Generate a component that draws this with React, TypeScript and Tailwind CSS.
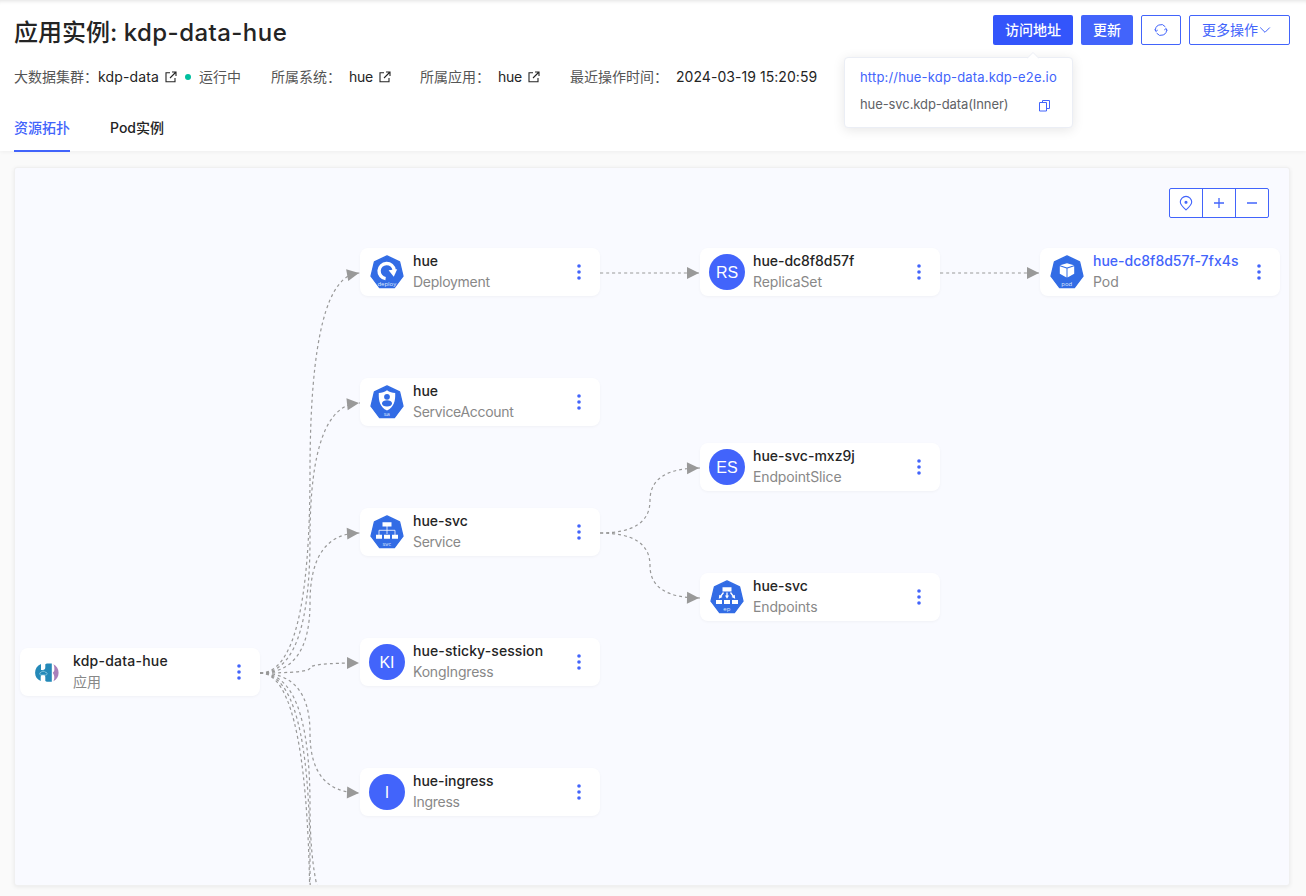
import React from "react";

const SANS = "font-['Inter','Noto_Sans_CJK_SC',sans-serif]";

const HEPTAGON = "M18 1.9 L30.6 7.9 L34 22.2 L25.4 33.7 H10.6 L2 22.2 L5.4 7.9 Z";

function Hept({ label, children }: { label: string; children: React.ReactNode }) {
  return (
    <svg width="36" height="36" viewBox="0 0 36 36" className="shrink-0">
      <path d={HEPTAGON} fill="#326ce5" stroke="#326ce5" strokeWidth="1.3" strokeLinejoin="round" />
      {children}
      <text x="17.8" y="32.2" fontSize="6" fill="#dfe8fc" textAnchor="middle" fontFamily="Open Sans, sans-serif">
        {label}
      </text>
    </svg>
  );
}

function KindIcon({ kind }: { kind: string }) {
  if (kind === "Deployment")
    return (
      <Hept label="deploy">
        <path d="M16.6 24.6A7.6 7.6 0 1 1 25.2 16.2" fill="none" stroke="#fff" strokeWidth="3.4" />
        <path d="M19.6 16.300l8.600-1.100-3.400 7.600z" fill="#fff" />
      </Hept>
    );
  if (kind === "ServiceAccount")
    return (
      <Hept label="sa">
        <path d="M18 6.200c2.600 2 5.200 2.600 8.200 2.800.3 8-1.200 14.200-8.200 17.500C11 23.200 9.500 17 9.800 9c3-.2 5.600-.8 8.200-2.800z" fill="#fff" />
        <circle cx="18" cy="12.800" r="2.900" fill="#326ce5" />
        <path d="M13 19.300c0-4 10-4 10 0 0 2.200-2 3.200-5 3.200s-5-1-5-3.200z" fill="#326ce5" />
      </Hept>
    );
  if (kind === "Service")
    return (
      <Hept label="svc">
        <path d="M18 12v8M10 21v-4.700h16V21" fill="none" stroke="#fff" strokeWidth=".8" />
        <path d="M13.500 8.200h9v4.200h-9zM7 20.700h6v4H7zM15 20.700h6v4h-6zM23 20.700h6v4h-6z" fill="#fff" />
      </Hept>
    );
  if (kind === "Endpoints")
    return (
      <Hept label="ep">
        <path d="M13.500 8.200h9v4.200h-9zM7 21h6v4H7zM15 21h6v4h-6zM23 21h6v4h-6z" fill="#fff" />
        <path d="M14.500 13.500l-3 4M18 13.500v4M21.500 13.500l3 4" stroke="#fff" strokeWidth="1.300" />
        <path d="M9.800 19.700l.5-4 3.200 2.400zM16 16.500h4L18 19.700zM26.200 19.700l-.5-4-3.200 2.400z" fill="#fff" />
      </Hept>
    );
  if (kind === "Pod")
    return (
      <Hept label="pod">
        <path d="M18 9.200l7 2.100-7 2.200-7-2.200zM10.800 12.300l6.700 2.100v9.200l-6.700-3.800zM25.200 12.300l-6.700 2.100v9.200l6.700-3.800z" fill="#fff" />
      </Hept>
    );
  if (kind === "应用")
    return (
      <svg width="36" height="36" viewBox="0 0 36 36" className="shrink-0">
        <path d="M12 10v6h1.800c1.700 0 2.500-.9 2.500-2.700V10.200l1.500-.6h5v18.100h-5l-1.500-.7v-3.800c0-1.700-.8-2.500-2.300-2.500s-2.300.8-2.300 2.500v3.700C8 25.500 6.100 22.500 6.100 18.700s2-7 5.900-8.700z" fill="#2489b8" />
        <path d="M11.800 21.100c-1.600-.3-1.500-2.700.3-2.700.4-1.600 3.200-1.800 3.900-.2 2.600-.3 2.800 2.700.5 2.900z" fill="#2489b8" stroke="#a5d8ea" strokeWidth=".7" />
        <path d="M24.400 10.200c3.300 1.500 5.200 4.700 5.200 8.500s-1.900 7-5.200 8.500c1-1.900 1.200-4.400.5-6.300l-1.100-2.200 1.400-1.700c.4-2.300.2-4.800-.8-6.800z" fill="#aa7fba" />
      </svg>
    );
  const initials: Record<string, string> = { ReplicaSet: "RS", EndpointSlice: "ES", KongIngress: "KI", Ingress: "I" };
  return (
    <div className="flex h-9 w-9 shrink-0 items-center justify-center rounded-full bg-[#4264fb] pt-[2px] font-['Liberation_Sans',sans-serif] text-[16px] text-white">
      {initials[kind]}
    </div>
  );
}

type NodeData = { x: number; y: number; name: string; kind: string; nameClass?: string; kindClass?: string };

const nodes: NodeData[] = [
  { x: 5, y: 480, name: "kdp-data-hue", kind: "应用", nameClass: "tracking-[0.22px]" },
  { x: 345, y: 80, name: "hue", kind: "Deployment", kindClass: "tracking-[-0.27px]" },
  { x: 685, y: 80, name: "hue-dc8f8d57f", kind: "ReplicaSet", nameClass: "tracking-[-0.04px]", kindClass: "tracking-[-0.12px]" },
  { x: 1025, y: 80, name: "hue-dc8f8d57f-7fx4s", kind: "Pod" },
  { x: 345, y: 210, name: "hue", kind: "ServiceAccount", kindClass: "tracking-[-0.3px]" },
  { x: 345, y: 340, name: "hue-svc", kind: "Service", kindClass: "tracking-[-0.35px]" },
  { x: 685, y: 275, name: "hue-svc-mxz9j", kind: "EndpointSlice", kindClass: "tracking-[-0.15px]" },
  { x: 685, y: 405, name: "hue-svc", kind: "Endpoints", kindClass: "tracking-[-0.15px]" },
  { x: 345, y: 470, name: "hue-sticky-session", kind: "KongIngress", nameClass: "tracking-[0.09px]", kindClass: "tracking-[-0.2px]" },
  { x: 345, y: 600, name: "hue-ingress", kind: "Ingress", kindClass: "tracking-[-0.28px]" },
];

function Node({ n }: { n: NodeData }) {
  const color = n.kind === "Pod" ? "text-[#4264fb]" : "text-[#242424]";
  return (
    <div
      className="absolute flex h-12 w-60 items-center rounded-[8px] bg-white pr-[17px] pl-[9px] shadow-[0_1px_3px_rgba(0,0,0,0.04)]"
      style={{ left: n.x, top: n.y }}
    >
      <KindIcon kind={n.kind} />
      <div className="ml-2 flex-1 pb-[3px] text-[14px] leading-[21px] whitespace-nowrap">
        <div className={`font-medium ${color} ${n.nameClass ?? ""}`}>{n.name}</div>
        <div className={`text-[#888] ${n.kindClass ?? ""}`}>{n.kind}</div>
      </div>
      <svg width="8" height="18" viewBox="0 0 8 18" fill="#4264fb">
        <circle cx="4" cy="3" r="1.800" />
        <circle cx="4" cy="9" r="1.800" />
        <circle cx="4" cy="15" r="1.800" />
      </svg>
    </div>
  );
}

function curve(x1: number, y1: number, x2: number, y2: number) {
  const mx = (x1 + x2) / 2;
  const my = (y1 + y2) / 2;
  return `M${x1} ${y1} Q${mx} ${y1} ${mx} ${my} Q${mx} ${y2} ${x2} ${y2}`;
}

/* start x, start y, end y, arrow tilt in degrees */
const edges: [number, number, number, number][] = [
  [245, 505, 105, -10],
  [245, 505, 235, -6],
  [245, 505, 365, -3],
  [245, 505, 495, 0],
  [245, 505, 625, 2],
  [245, 505, 770, 0],
  [245, 505, 885, 0],
  [245, 505, 1015, 0],
  [585, 105, 105, 0],
  [925, 105, 105, 0],
  [585, 365, 300, -1],
  [585, 365, 430, 1],
];

function Edges() {
  return (
    <svg className="absolute inset-0" width="1274" height="717" fill="none">
      {edges.map(([x, y1, y2, tilt], i) => (
        <g key={i}>
          <path d={curve(x, y1, x + 100, y2)} stroke="#999" strokeWidth="1.200" strokeDasharray="3 3" />
          {y2 < 700 && (
            <path d={`M${x + 87} ${y2 - 6}l12 6-12 6z`} fill="#999" transform={`rotate(${tilt} ${x + 99} ${y2})`} />
          )}
        </g>
      ))}
    </svg>
  );
}

function External() {
  return (
    <svg className="mt-[2px] ml-[6px]" width="12" height="12" viewBox="0 0 12 12" fill="none" stroke="#242424" strokeWidth="1.100">
      <path d="M5 1.800H1v9h9V7M7 1h4v4M11 1L5 7" />
    </svg>
  );
}

export default function App() {
  return (
    <div className={`${SANS} h-[896px] w-[1306px] overflow-hidden bg-[#fafafa] text-[14px] text-[#242424]`}>
      <header className="relative h-[151px] bg-white px-[14px] shadow-[inset_0_5px_4px_-4px_rgba(0,0,0,0.12),0_1px_4px_rgba(0,0,0,0.05)]">
        <div className="flex h-[60px] items-center justify-between pr-[2px]">
          <h1 className="mt-[6px] text-[24px] leading-[32px] font-medium">
            应用实例: <span className="tracking-[0.45px]">kdp-data-hue</span>
          </h1>
          <div className="flex gap-2 text-[14px] font-medium">
            <button className="h-[30px] w-20 rounded-[2px] bg-[#3355fb] pb-[2px] text-white">访问地址</button>
            <button className="h-[30px] w-[52px] rounded-[2px] bg-[#4264fb] pb-[2px] text-white">更新</button>
            <button className="flex h-[30px] w-10 items-center justify-center rounded-[2px] border border-[#4264fb]">
              <svg width="14" height="14" viewBox="0 0 14 14" fill="none" stroke="#4264fb" strokeWidth="1">
                <path d="M1.700 8.200A5.400 5.400 0 0 1 11.400 3.900M12.300 5.800A5.400 5.400 0 0 1 2.600 10.100" />
                <path d="M.700 6.300l1.200 2.200 1.900-1.500M13.300 7.700l-1.200-2.200-1.900 1.500" strokeWidth=".9" />
              </svg>
            </button>
            <button className="flex h-[30px] w-[101px] items-center rounded-[2px] border border-[#4264fb] pl-3 font-normal text-[#4264fb]">
              <span className="pb-[2px]">更多操作</span>
              <svg className="ml-[1px]" width="12" height="12" viewBox="0 0 12 12" fill="none" stroke="#4264fb">
                <path d="M1.200 3.500L6 8.300l4.800-4.800" />
              </svg>
            </button>
          </div>
        </div>
        <div className="flex h-[34px] items-center pb-[2px] whitespace-nowrap text-[#555]">
          <span className="w-[84px]">大数据集群：</span>
          <span className="flex w-[87px] items-center tracking-[0.13px] text-[#242424]">kdp-data<External /></span>
          <span className="mt-[2px] h-[6px] w-[6px] rounded-full bg-[#00bf9f]" />
          <span className="ml-2 w-[72px]">运行中</span>
          <span className="w-[78px]">所属系统：</span>
          <span className="flex w-[71px] items-center tracking-[-0.3px] text-[#242424]">hue<External /></span>
          <span className="w-[78px]">所属应用：</span>
          <span className="flex w-[72px] items-center tracking-[-0.3px] text-[#242424]">hue<External /></span>
          <span className="w-[106px]">最近操作时间：</span>
          <span className="tracking-[0.05px] text-[#242424]">2024-03-19 15:20:59</span>
        </div>
        <nav className="mt-[10px] flex gap-10 font-medium">
          <span className="h-[48px] border-b-2 border-[#4264fb] leading-[48px] text-[#4264fb]">资源拓扑</span>
          <span className="leading-[48px]">Pod实例</span>
        </nav>
        <div className="absolute top-[57px] left-[844px] z-10 h-[71px] w-[229px] rounded-[4px] border border-[#ebeef5] bg-white pt-[6px] pl-[15px] text-[13px] leading-[27px] whitespace-nowrap shadow-[0_2px_12px_rgba(0,0,0,0.1)]">
          <svg className="absolute -top-[6px] left-[182px]" width="12" height="7" viewBox="0 0 12 7">
            <path d="M0 6.500L6 .500l6 6" fill="#fff" stroke="#ebeef5" />
          </svg>
          <div className="tracking-[0.17px] text-[#4264fb]">http://hue-kdp-data.kdp-e2e.io</div>
          <div className="flex items-center text-[#606266]">
            <span className="w-[179px] tracking-[-0.09px]">hue-svc.kdp-data(Inner)</span>
            <svg className="mt-[2px]" width="12" height="13" viewBox="0 0 12 13" fill="none" stroke="#4264fb">
              <path d="M.500 3.500h7v8.500h-7zM3.500 3.500v-2h7v8h-3" />
            </svg>
          </div>
        </div>
      </header>
      <main className="relative mt-4 ml-[14px] h-[719px] w-[1276px] overflow-hidden rounded-[3px] border border-[#f0f0f0] bg-[#f9faff] shadow-[0_1px_4px_rgba(0,0,0,0.07)]">
        <Edges />
        {nodes.map((n, i) => (
          <Node key={i} n={n} />
        ))}
        <div className="mt-5 mr-5 ml-auto flex h-[30px] w-[100px] divide-x divide-[#4264fb] rounded-[2px] border border-[#4264fb] bg-white">
          <span className="flex flex-1 items-center justify-center">
            <svg width="14" height="16" viewBox="0 0 14 16" fill="none" stroke="#4264fb" strokeWidth="1.100">
              <path d="M7 14.900C4 12.300 1.300 9.900 1.300 7.100a5.700 5.700 0 0 1 11.400 0C12.700 9.900 10 12.300 7 14.900z" />
              <circle cx="7" cy="7.200" r="1" fill="#4264fb" />
            </svg>
          </span>
          <span className="flex flex-1 items-center justify-center">
            <svg width="12" height="12" stroke="#4264fb" strokeWidth="1.300"><path d="M1 6h10M6 1v10" /></svg>
          </span>
          <span className="flex flex-1 items-center justify-center">
            <svg width="12" height="12" stroke="#4264fb" strokeWidth="1.300"><path d="M1 6h10" /></svg>
          </span>
        </div>
      </main>
    </div>
  );
}
